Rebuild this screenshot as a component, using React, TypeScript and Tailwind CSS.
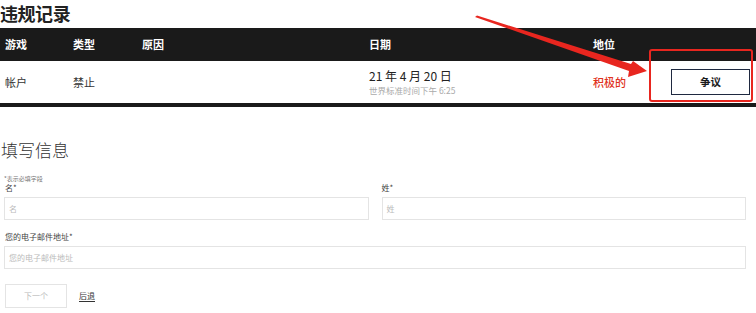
const font = { fontFamily: '"Noto Sans CJK SC", "Noto Sans", sans-serif' };

const Annotation = () => (
  <>
    <div className="absolute left-[649px] top-[49px] w-[104px] h-[53px] border-2 border-[#e8261f] rounded-[3px]" />
    <svg className="absolute left-0 top-0 pointer-events-none" width="756" height="120" viewBox="0 0 756 120">
      <polygon points="475,17 477,15.5 631,64 633,61 647,71 628,77 629,71" fill="#e8261f" />
    </svg>
  </>
);

const App = () => {
  return (
    <div className="relative w-[756px] h-[313px] bg-white overflow-hidden" style={font}>
      <section className="pt-[1px]">
        <div className="text-[18px] leading-[24px] font-bold text-[#222] tracking-tight">违规记录</div>
        <div className="mt-[3px]">
          <div className="grid grid-cols-[73px_69px_227px_224px_78px_1fr] h-[33px] items-center bg-[#1a1a1a] text-white text-[11px] font-bold">
            <div className="pl-[5px]">游戏</div>
            <div>类型</div>
            <div>原因</div>
            <div>日期</div>
            <div>地位</div>
            <div />
          </div>
          <div className="grid grid-cols-[73px_69px_227px_224px_78px_1fr] h-[46px] items-center text-[11px] text-[#333] border-b-4 border-[#1a1a1a]">
            <div className="pl-[5px]">帐户</div>
            <div>禁止</div>
            <div />
            <div className="flex flex-col">
              <span className="text-[12px] leading-[16px] text-[#222]">21 年 4 月 20 日</span>
              <span className="text-[8.5px] leading-[12px] text-[#aaa]">世界标准时间下午 6:25</span>
            </div>
            <div className="text-[#e0321c] font-medium">积极的</div>
            <div className="pr-[6px]">
              <button className="w-[79px] h-[26px] border border-[#1f2940] bg-white text-[10.5px] font-bold text-[#1a1a1a]">争议</button>
            </div>
          </div>
        </div>
      </section>

      <section className="mt-[32px] pl-[4px] pr-[10px]">
        <div className="-ml-[3px] text-[17px] leading-[22px] font-light text-[#333]">填写信息</div>
        <div className="mt-[13px] grid grid-cols-2 gap-x-[13px] items-end">
          <div>
            <div className="text-[6px] leading-[9px] text-[#777]">*表示必填字段</div>
            <div className="text-[8px] leading-[9px] text-[#444] pl-[1px]">名*</div>
            <div className="mt-[5px] h-[23px] border border-[#e4e4e4] flex items-center pl-[4px] text-[8px] text-[#bbb]">名</div>
          </div>
          <div>
            <div className="text-[8px] leading-[9px] text-[#444]">姓*</div>
            <div className="mt-[5px] h-[23px] border border-[#e4e4e4] flex items-center pl-[4px] text-[8px] text-[#bbb]">姓</div>
          </div>
        </div>
        <div className="mt-[12px] text-[8px] leading-[9px] text-[#444] pl-[1px]">您的电子邮件地址*</div>
        <div className="mt-[5px] h-[23px] border border-[#e4e4e4] flex items-center pl-[4px] text-[8px] text-[#bbb]">您的电子邮件地址</div>
        <div className="mt-[15px] flex items-center gap-[12px] pl-[1px]">
          <button className="w-[62px] h-[24px] border border-[#e4e4e4] text-[8px] text-[#bbb] bg-white">下一个</button>
          <span className="text-[8px] text-[#333] underline underline-offset-2">后退</span>
        </div>
      </section>

      <Annotation />
    </div>
  );
};

export default App;
